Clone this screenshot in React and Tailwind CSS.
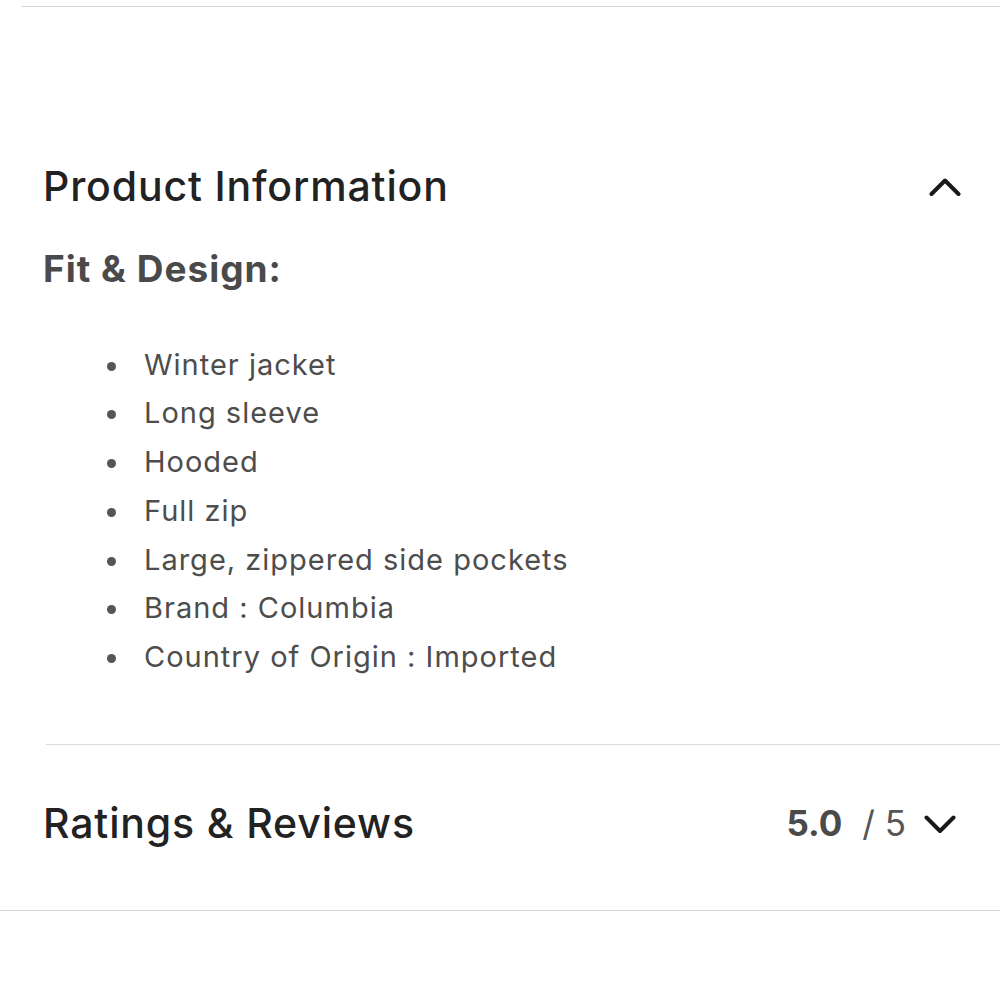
const items = [
  "Winter jacket",
  "Long sleeve",
  "Hooded",
  "Full zip",
  "Large, zippered side pockets",
  "Brand : Columbia",
  "Country of Origin : Imported",
];

const ChevronUp = () => (
  <svg width="32" height="20" viewBox="0 0 32 20" fill="none">
    <path d="M2.5 17 L16 3.5 L29.5 17" stroke="#1a1a1a" strokeWidth="4" strokeLinecap="round" strokeLinejoin="round" />
  </svg>
);

const ChevronDown = () => (
  <svg width="32" height="20" viewBox="0 0 32 20" fill="none">
    <path d="M2.5 3.5 L16 17 L29.5 3.5" stroke="#1a1a1a" strokeWidth="4" strokeLinecap="round" strokeLinejoin="round" />
  </svg>
);

export default function App() {
  return (
    <div className="w-[1000px] h-[1000px] bg-white overflow-hidden font-['Inter',sans-serif]">
      {/* top divider */}
      <div className="pt-[6px] pl-[22px]">
        <div className="h-px bg-[#d4d4d4]" />
      </div>

      {/* Product Information */}
      <div className="pl-[43px] pr-[39px] pt-[150px]">
        <div className="flex items-center justify-between h-[60px]">
          <h2 className="text-[41px] font-medium text-[#222] tracking-[0.85px]">Product Information</h2>
          <ChevronUp />
        </div>
        <h3 className="mt-[24px] text-[37px] font-bold text-[#4a4a4a] tracking-[1px]">Fit &amp; Design:</h3>
        <ul className="mt-[44px] pl-[89px] list-disc marker:text-[#555] text-[29px] text-[#4d4d4d] leading-[48.8px] tracking-[1px]">
          {items.map((item, i) => (
            <li key={i} className="pl-[12px]">{item}</li>
          ))}
        </ul>
      </div>

      {/* divider */}
      <div className="mt-[62px] pl-[46px]">
        <div className="h-px bg-[#dcdcdc]" />
      </div>

      {/* Ratings & Reviews */}
      <div className="flex items-center justify-between pl-[43px] pr-[44px] pb-[8px] h-[165px]">
        <h2 className="text-[41px] font-medium text-[#222] tracking-[0.85px]">Ratings &amp; Reviews</h2>
        <div className="flex items-center">
          <span className="text-[35px] font-bold text-[#4a4a4a]">5.0</span>
          <span className="ml-[20px] text-[35px] text-[#555]">/ 5</span>
          <span className="ml-[18px]"><ChevronDown /></span>
        </div>
      </div>

      <div className="h-px bg-[#d4d4d4]" />
    </div>
  );
}
